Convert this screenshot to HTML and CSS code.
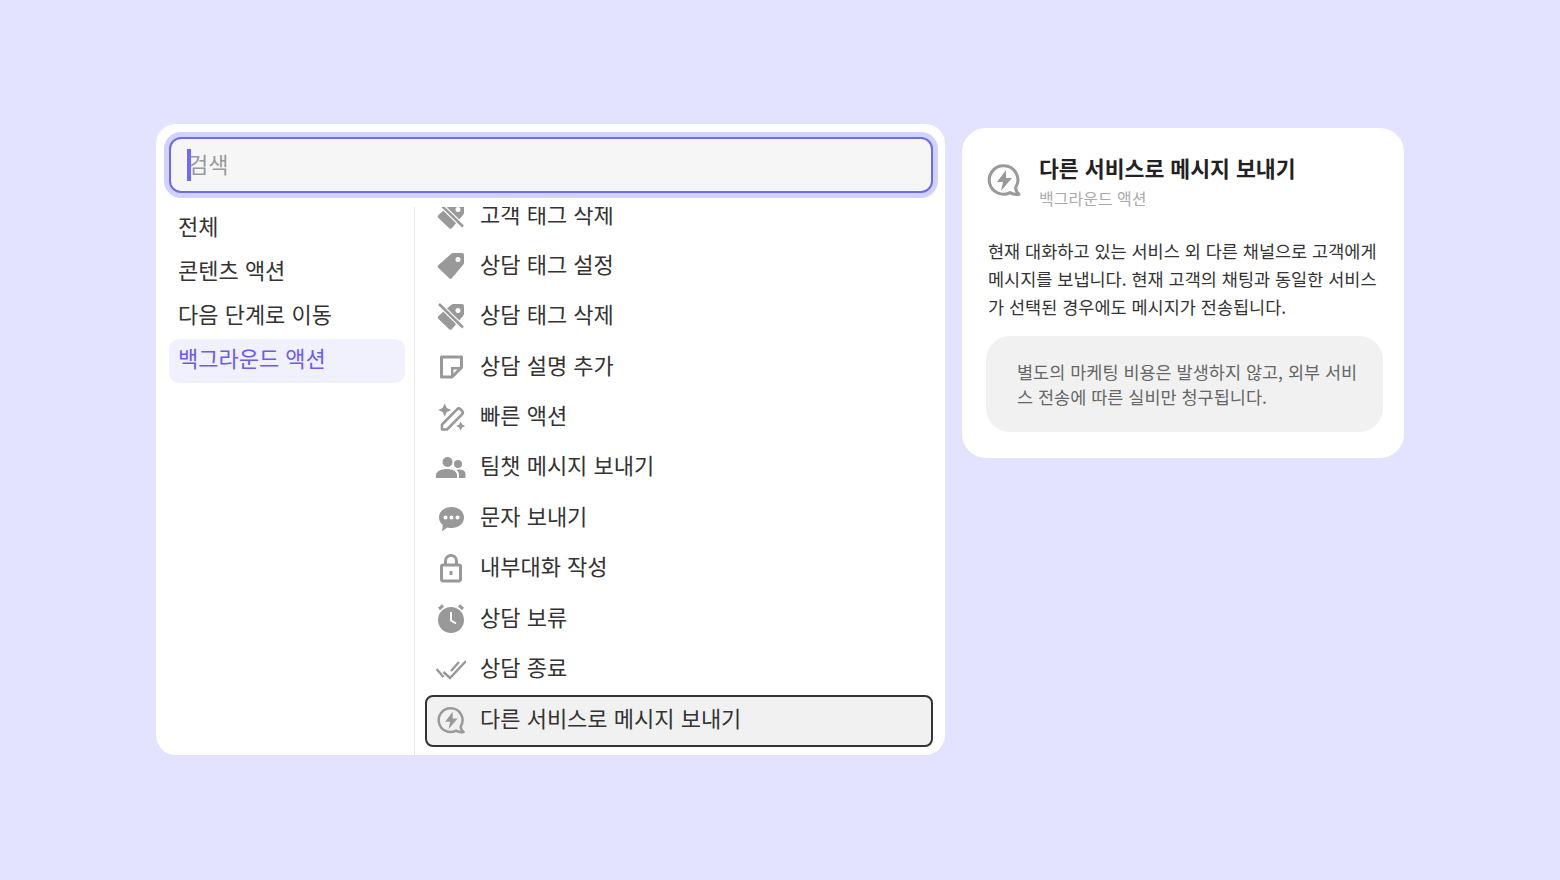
FILE: index.html
```html
<!DOCTYPE html>
<html lang="ko">
<head>
  <meta charset="UTF-8">
  <title>액션 선택</title>
  <link rel="stylesheet" href="styles.css">
</head>
<body>
  <div class="picker">
    <div class="search-box">
      <input class="search-input" type="text" placeholder="검색">
      <span class="caret"></span>
    </div>
    <div class="picker-body">
      <ul class="category-list">
        <li class="category">전체</li>
        <li class="category">콘텐츠 액션</li>
        <li class="category">다음 단계로 이동</li>
        <li class="category active">백그라운드 액션</li>
      </ul>
      <ul class="action-list">
        <li class="action">
          <svg class="icon" viewBox="0 0 30 30"><path class="fill" fill-rule="evenodd" d="M18 3h8a2 2 0 0 1 2 2v8a3 3 0 0 1-1 2L16 28a2 2 0 0 1-3 0L2.500 18a2 2 0 0 1 0-3L15 4a4 4 0 0 1 3-1zm4 4a2.500 2.500 0 1 0 0 5 2.500 2.500 0 0 0 0-5z"/><path class="slash-gap" d="M3 3l24 23.500"/><path class="slash" d="M3 3l24 23.500"/></svg>
          <span>고객 태그 삭제</span>
        </li>
        <li class="action">
          <svg class="icon" viewBox="0 0 30 30"><path class="fill" fill-rule="evenodd" d="M18 3h8a2 2 0 0 1 2 2v8a3 3 0 0 1-1 2L16 28a2 2 0 0 1-3 0L2.500 18a2 2 0 0 1 0-3L15 4a4 4 0 0 1 3-1zm4 4a2.500 2.500 0 1 0 0 5 2.500 2.500 0 0 0 0-5z"/></svg>
          <span>상담 태그 설정</span>
        </li>
        <li class="action">
          <svg class="icon" viewBox="0 0 30 30"><path class="fill" fill-rule="evenodd" d="M18 3h8a2 2 0 0 1 2 2v8a3 3 0 0 1-1 2L16 28a2 2 0 0 1-3 0L2.500 18a2 2 0 0 1 0-3L15 4a4 4 0 0 1 3-1zm4 4a2.500 2.500 0 1 0 0 5 2.500 2.500 0 0 0 0-5z"/><path class="slash-gap" d="M3 3l24 23.500"/><path class="slash" d="M3 3l24 23.500"/></svg>
          <span>상담 태그 삭제</span>
        </li>
        <li class="action">
          <svg class="icon" viewBox="0 0 30 30"><path class="line" d="M5.500 6h20v10.500L16 26H5.500z"/><path class="fill" d="M15 26V16h10.500v2.500h-8V26z"/></svg>
          <span>상담 설명 추가</span>
        </li>
        <li class="action">
          <svg class="icon" viewBox="0 0 30 30"><path class="fill" d="M8.700 1.500l2.100 4.400 4.400 2.100-4.400 2.100-2.100 4.400-2.100-4.400L2.200 8l4.400-2.100zM24.700 19.500l1.500 3 3 1.500-3 1.500-1.500 3-1.500-3-3-1.500 3-1.500z"/><path class="line thin" d="M6 27.500v-5L21 7.300a2.500 2.500 0 0 1 3.500 0L26 8.800a2.500 2.500 0 0 1 0 3.500L11 27.500z"/></svg>
          <span>빠른 액션</span>
        </li>
        <li class="action">
          <svg class="icon" viewBox="0 0 30 30"><circle class="fill" cx="11.500" cy="10" r="5"/><circle class="fill" cx="22" cy="12" r="4"/><path class="fill" d="M0 26v-3c0-4 6-6 11-6s10 2 10 6v3zM23 26v-3c0-2-.8-3.700-2.500-5 1-.3 2-.4 3-.4 3 0 6 1.500 6 4.400v4z"/></svg>
          <span>팀챗 메시지 보내기</span>
        </li>
        <li class="action">
          <svg class="icon" viewBox="0 0 30 30"><path class="fill" fill-rule="evenodd" d="M15.500 5C22.500 5 28 9.500 28 15.500S22.500 26 15.500 26c-1.500 0-3-.2-4.300-.6L6 29.500l.8-6.500C4.500 21 3 18.500 3 15.500 3 9.500 8.500 5 15.500 5zM9.500 13.500a2 2 0 1 0 0 4 2 2 0 0 0 0-4zm6 0a2 2 0 1 0 0 4 2 2 0 0 0 0-4zm6 0a2 2 0 1 0 0 4 2 2 0 0 0 0-4z"/></svg>
          <span>문자 보내기</span>
        </li>
        <li class="action">
          <svg class="icon" viewBox="0 0 30 30"><path class="line" d="M7 12h16a1.500 1.500 0 0 1 1.500 1.500v13A1.500 1.500 0 0 1 23 28H7a1.500 1.500 0 0 1-1.500-1.500v-13A1.500 1.500 0 0 1 7 12zM9.500 12V8a5.500 5.500 0 0 1 11 0v4"/><path class="line" d="M15 18v4"/></svg>
          <span>내부대화 작성</span>
        </li>
        <li class="action">
          <svg class="icon" viewBox="0 0 30 30"><circle class="fill" cx="15" cy="17" r="13"/><path class="clock-hand" d="M15 9v8.500l5 3"/><path class="line" d="M3 6l4-3.500M27 6l-4-3.500"/></svg>
          <span>상담 보류</span>
        </li>
        <li class="action">
          <svg class="icon" viewBox="0 0 30 30"><path class="line check" d="M0.500 15l7 8M7.500 18l6.500 6L30 7M15 17l8-9"/></svg>
          <span>상담 종료</span>
        </li>
        <li class="action selected">
          <svg class="icon" viewBox="0 0 36 36"><use href="#bolt-chat"/></svg>
          <span>다른 서비스로 메시지 보내기</span>
        </li>
      </ul>
    </div>
  </div>

  <div class="detail">
    <div class="detail-head">
      <svg class="detail-icon" viewBox="0 0 36 36">
        <g id="bolt-chat">
          <path class="line" d="M17.500 2.800a14.200 14.200 0 1 0 6.500 26.800c2.500 1.500 6 2.200 9 1.700-1.700-1.500-3.500-4.300-3.300-6.800A14.200 14.200 0 0 0 17.500 2.800z"/>
          <path class="fill" d="M20 7L11 19h6l-2 9 11-13h-6z"/>
        </g>
      </svg>
      <div>
        <h2 class="detail-title">다른 서비스로 메시지 보내기</h2>
        <p class="detail-sub">백그라운드 액션</p>
      </div>
    </div>
    <p class="detail-text">현재 대화하고 있는 서비스 외 다른 채널으로 고객에게 메시지를 보냅니다. 현재 고객의 채팅과 동일한 서비스가 선택된 경우에도 메시지가 전송됩니다.</p>
    <p class="detail-note">별도의 마케팅 비용은 발생하지 않고, 외부 서비스 전송에 따른 실비만 청구됩니다.</p>
  </div>
</body>
</html>
```

FILE: styles.css
```css
* {
  box-sizing: border-box;
}

body {
  margin: 0;
  height: 880px;
  padding: 124px 0 0 156px;
  display: flex;
  align-items: flex-start;
  gap: 17px;
  overflow: hidden;
  background-color: #e3e3ff;
  color: #333;
  font-family: "Noto Sans CJK KR", "Noto Sans", sans-serif;
}

ul {
  margin: 0;
  padding: 0;
  list-style: none;
}

.picker {
  width: 789px;
  height: 631px;
  padding: 13px 12px 0 13px;
  display: flex;
  flex-direction: column;
  background-color: white;
  border-radius: 20px;
}

.search-box {
  position: relative;
  flex: none;
  height: 56px;
  border: 2px solid #6b6bf0;
  border-radius: 12px;
  background-color: #f6f6f6;
  box-shadow: 0 0 0 5px #d2d2ff;
}

.search-input {
  width: 100%;
  height: 100%;
  padding: 0 17px 4px;
  border: none;
  outline: none;
  background: transparent;
  font-family: inherit;
  font-size: 22px;
}

.search-input::placeholder {
  color: #999;
}

.caret {
  position: absolute;
  left: 16px;
  top: 10px;
  width: 4px;
  height: 32px;
  background-color: #6b6bff;
}

.picker-body {
  flex: 1;
  min-height: 0;
  margin-top: 14px;
  display: flex;
}

.category-list {
  flex: none;
  width: 236px;
  margin-right: 9px;
}

.category {
  height: 44px;
  padding: 0 9px 8px;
  display: flex;
  align-items: center;
  font-size: 22px;
  border-radius: 10px;
}

.category.active {
  background-color: #f1f1fd;
  color: #6b5cf0;
}

.action-list {
  flex: 1;
  min-width: 0;
  padding-left: 10px;
  border-left: 1px solid #e8e8e8;
  overflow: hidden;
}

.action {
  height: 50.4px;
  padding-left: 9px;
  display: flex;
  align-items: center;
  gap: 14px;
  border: 2px solid transparent;
  border-radius: 8px;
  font-size: 22px;
}

.action span {
  margin-bottom: 3px;
}

.action:first-child {
  margin-top: -18.200px;
}

.action.selected {
  height: 52px;
  margin-top: 2px;
  padding-bottom: 4px;
  border-color: #333;
  background-color: #f1f1f1;
}

.icon {
  flex: none;
  width: 30px;
  height: 30px;
  margin-top: 2px;
}

.selected .icon {
  margin-top: 5px;
}

.fill {
  fill: #999;
}

.line {
  fill: none;
  stroke: #999;
  stroke-width: 3;
  stroke-linejoin: round;
}

.line.thin {
  stroke-width: 2.600;
}

.line.check {
  stroke-width: 2.400;
  stroke-linejoin: miter;
}

.slash {
  fill: none;
  stroke: #999;
  stroke-width: 2.500;
}

.slash-gap {
  fill: none;
  stroke: white;
  stroke-width: 5;
}

.clock-hand {
  fill: none;
  stroke: white;
  stroke-width: 2;
}

.detail {
  width: 442px;
  height: 330px;
  margin-top: 4px;
  padding: 24px 21px 0 26px;
  background-color: white;
  border-radius: 24px;
}

.detail-head {
  display: flex;
  align-items: center;
  gap: 17.500px;
}

.detail-icon {
  flex: none;
  width: 36px;
  height: 36px;
  margin-left: -2.500px;
}

.detail-title {
  margin: -1px 0 1px;
  font-size: 21.600px;
  line-height: 34px;
  font-weight: 700;
  color: #222;
}

.detail-sub {
  margin: 0;
  font-size: 16px;
  line-height: 24px;
  color: #aaa;
}

.detail-text {
  margin: 27px 0 0;
  font-size: 17.500px;
  line-height: 28px;
  word-break: break-all;
}

.detail-note {
  margin: 15px 0 0 -2px;
  padding: 23px 20px 23px 31px;
  font-size: 17.500px;
  line-height: 25px;
  color: #666;
  background-color: #f1f1f1;
  border-radius: 24px;
  word-break: break-all;
}
```
